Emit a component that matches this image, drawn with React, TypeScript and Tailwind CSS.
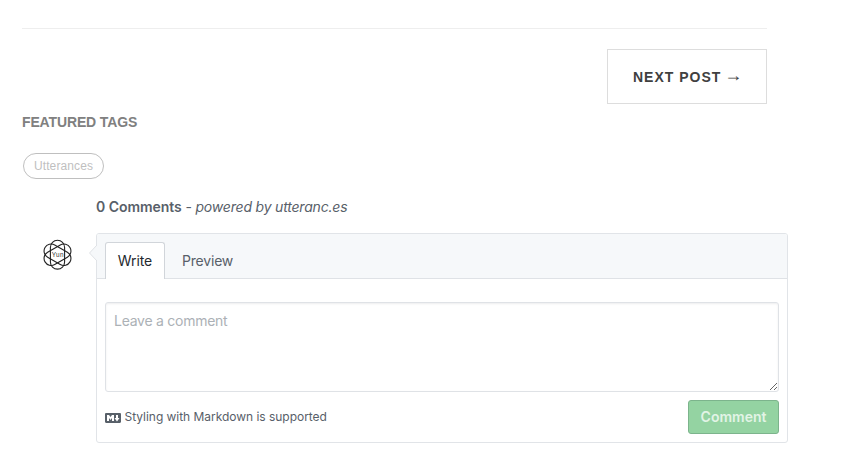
function Avatar() {
  return (
    <svg className="ml-[21px] mt-[6px] h-[31px] w-[31px] shrink-0" viewBox="0 0 31 31" fill="none" stroke="#222" strokeWidth="1.1">
      {[0, 60, 120].map((angle) => (
        <rect key={angle} x="8.4" y="1.3" width="14.2" height="28.8" rx="7.1" transform={`rotate(${angle} 15.5 15.7)`} />
      ))}
      <text x="15.8" y="18" textAnchor="middle" fontSize="6.4" letterSpacing="0.4" fill="#333" stroke="none" fontFamily="Liberation Sans, sans-serif">
        Yun
      </text>
    </svg>
  );
}

function MarkdownIcon() {
  return (
    <svg className="mt-px h-4 w-4 shrink-0" viewBox="0 0 16 16" fill="#586069">
      <path fillRule="evenodd" d="M14.85 3H1.15C.52 3 0 3.52 0 4.15v7.69C0 12.48.52 13 1.15 13h13.69c.64 0 1.15-.52 1.15-1.15v-7.7C16 3.52 15.48 3 14.85 3zM9 11H7V8L5.5 9.92 4 8v3H2V5h2l1.5 2L7 5h2v6zm2.99.5L9.5 8H11V5h2v3h1.5l-2.51 3.5z" />
    </svg>
  );
}

export default function App() {
  return (
    <div className="h-[460px] w-[850px] overflow-hidden bg-white font-['Inter',sans-serif] text-sm text-[#586069]">
      <div className="ml-[22px] w-[745px] pt-7">
        <div className="h-px bg-[#eeeeee]" />
        <div className="mt-5 flex justify-end">
          <button className="flex h-[55px] w-[160px] items-center whitespace-pre border border-[#dddddd] pl-[25px] font-['Liberation_Sans',sans-serif] font-bold tracking-[1px] text-[#404040]">
            NEXT POST <span className="-ml-[2px] pb-1 font-['Liberation_Serif',serif] font-normal text-[18px] leading-none">→</span>
          </button>
        </div>
        <h5 className="mt-2 h-5 font-['Liberation_Sans',sans-serif] font-bold leading-5 tracking-[-0.14px] text-[#808080]">FEATURED TAGS</h5>
        <div className="ml-px mt-[21px] flex h-[26px] w-[81px] items-center justify-center rounded-full border border-[#bfbfbf] font-['Liberation_Sans',sans-serif] text-xs tracking-[0.1px] text-[#bfbfbf]">
          Utterances
        </div>
      </div>
      <div className="ml-[96px] mt-[17px] h-[22px] leading-[22px]">
        <span className="font-semibold tracking-[-0.05px]">0 Comments</span><span className="tracking-[-0.19px]"> - <em>powered by utteranc.es</em></span>
      </div>
      <div className="mt-[15px] flex">
        <div className="w-[96px] shrink-0 pl-[21px]">
          <Avatar />
        </div>
        <div className="relative h-[210px] w-[692px] rounded-[3px] border border-[#e1e4e8] bg-white">
          <svg className="absolute -left-[8px] top-[11px] h-4 w-2" viewBox="0 0 8 16">
            <path d="M8 0L0.5 8L8 16Z" fill="#f6f8fa" />
            <path d="M8 0L0.5 8L8 16" fill="none" stroke="#dfe2e6" />
          </svg>
          <div className="flex h-[45px] items-end rounded-t-[2px] border-b border-[#dfe2e6] bg-[#f6f8fa] pl-2">
            <div className="-mb-px flex h-[37px] w-[60px] items-center justify-center rounded-t-[3px] border border-b-0 border-[#d1d5da] bg-white tracking-[-0.1px] text-[#24292e]">Write</div>
            <div className="flex h-[35px] items-center pl-[17px] tracking-[-0.2px]">Preview</div>
          </div>
          <div className="px-2 pt-[23px]">
            <textarea className="block h-[90px] w-[674px] rounded-[3px] border border-[#dfe2e6] px-2 py-[7px] leading-[21px] tracking-[-0.26px] shadow-[inset_0_1px_2px_rgba(27,31,35,0.075)] placeholder:text-[#acb1b6]" placeholder="Leave a comment" />
            <div className="mt-2 flex justify-between">
              <div className="flex h-[34px] items-center gap-[3.5px] text-xs">
                <MarkdownIcon />
                <span className="tracking-[-0.03px]">Styling with Markdown is supported</span>
              </div>
              <button className="h-[34px] w-[91px] rounded-[3px] border border-[#7cb48c] bg-[#94d3a2] font-semibold text-[#e2f4e6]">Comment</button>
            </div>
          </div>
        </div>
      </div>
    </div>
  );
}
